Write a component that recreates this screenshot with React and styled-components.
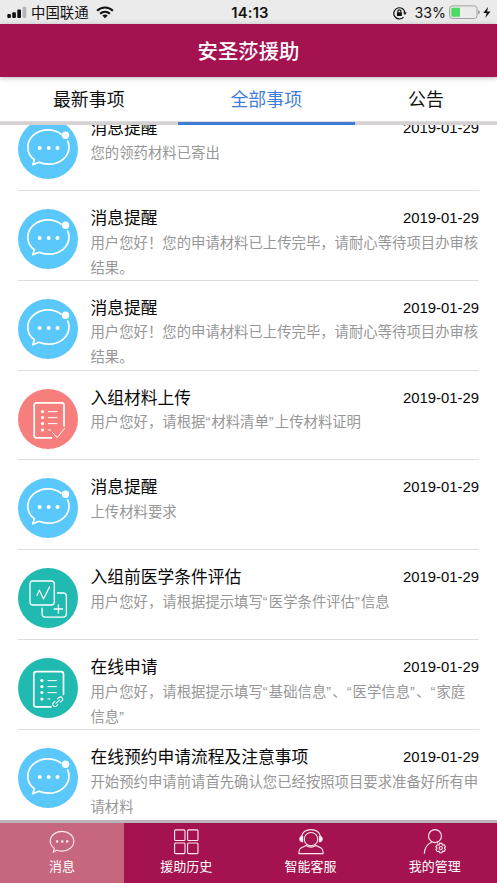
import React from "react";
import styled, { createGlobalStyle } from "styled-components";

const cjk = '"Noto Sans CJK SC", sans-serif';

const GlobalStyle = createGlobalStyle`
  * { box-sizing: border-box; }
  body { margin: 0; background: #fff; font-family: Inter, ${cjk}; }
`;

const Screen = styled.div`
  display: flex;
  flex-direction: column;
  width: 497px;
  height: 883px;
  overflow: hidden;
  background: #fff;
`;

const StatusBar = styled.div`
  flex: none;
  display: grid;
  grid-template-columns: 1fr auto 1fr;
  align-items: center;
  height: 24px;
  padding: 1px 5px 0 7px;
  background: #ebebeb;
  color: #111;
  font-size: 14.4px;
  line-height: 24px;
`;

const StatusGroup = styled.div`
  display: flex;
  align-items: center;
  justify-content: ${(p) => (p.$end ? "flex-end" : "flex-start")};
  height: 24px;

  svg {
    margin-bottom: 1px;
  }
`;

const Clock = styled.span`
  margin-left: 1px;
  font-size: 14.8px;
  font-weight: 600;
  letter-spacing: 0.2px;
`;

const Carrier = styled.span`
  margin: 0 7px 0 4px;
`;

const Percent = styled.span`
  margin: 0 3px 0 8px;
  font-size: 14.2px;
`;

const Header = styled.header`
  flex: none;
  position: relative;
  display: flex;
  align-items: center;
  justify-content: center;
  height: 53px;
  background: #a4134f;
  box-shadow: 0 1px 5px rgba(0, 0, 0, 0.28);
  color: #fff;
  font: 500 20.4px/53px ${cjk};
`;

const Tabs = styled.nav`
  flex: none;
  display: grid;
  grid-template-columns: 177.5px 177.5px 1fr;
  height: 48px;
`;

const Tab = styled.div`
  height: 48px;
  border-bottom: 3px solid ${(p) => (p.$active ? "#3f7dd8" : "#d6d2d3")};
  box-shadow: inset 0 -1px 0 #e0dddf;
  color: ${(p) => (p.$active ? "#3f7dd8" : "#111")};
  font: 400 17.9px/43px ${cjk};
  text-align: center;
`;

const ListViewport = styled.main`
  flex: 1;
  min-height: 0;
  overflow: hidden;
  padding: 0 18px;
`;

const List = styled.div`
  margin-top: -24px;
`;

const Row = styled.article`
  display: grid;
  grid-template-columns: 60px 1fr;
  column-gap: 12.5px;
  height: 89.87px;
  padding-top: 18px;
  border-bottom: 1px solid #dedede;

  &:last-child {
    border-bottom: 0;
  }
`;

const RowHead = styled.div`
  display: flex;
  justify-content: space-between;
  height: 20px;
`;

const RowTitle = styled.h2`
  margin: 0;
  color: #080808;
  font: 400 16.75px/17px ${cjk};
`;

const RowDate = styled.time`
  color: #080808;
  font: 14.85px/18px "Liberation Sans", sans-serif;
`;

const RowText = styled.p`
  margin: -0.3px 0 0;
  color: #979797;
  font-family: ${cjk};
  font-size: 14.37px;
  font-weight: 400;
  line-height: 25px;
`;

const Quote = styled.span`
  font-family: "Liberation Sans", sans-serif;
  letter-spacing: 1.2px;
  line-height: 1;
`;

const RowBody = styled.div`
  min-width: 0;
`;

const BottomNav = styled.nav`
  flex: none;
  display: grid;
  grid-template-columns: repeat(4, 1fr);
  height: 63px;
  border-top: 3px solid #b9b5ba;
  background: #a4134f;
`;

const NavItem = styled.div`
  display: flex;
  flex-direction: column;
  align-items: center;
  padding-top: 5px;
  background: ${(p) => (p.$active ? "#c6667f" : "#a4134f")};
  color: #fff;
  font: 400 13px/20px ${cjk};
`;

const NavSvg = styled.svg`
  display: block;
  flex: none;
  width: 28px;
  height: 28px;
  fill: none;
  stroke: #fbe9f0;
  stroke-width: 1.1;
`;

const Badge = styled.svg`
  display: block;
  width: 60px;
  height: 60px;
  fill: none;
  stroke: #fff;
  stroke-width: 1.7;
  stroke-linecap: round;
  stroke-linejoin: round;
`;

const ChatBadge = () => (
  <Badge viewBox="0 0 60 60">
    <circle cx="30" cy="30" r="30" fill="#5ac8fa" stroke="none" />
    <path d="M43 15.2C39.5 12.3 35 10.8 30 10.8C18.8 10.8 9.8 18.5 9.8 28.3C9.8 33.6 12.4 37.9 16.4 40.8L14.8 45.8L21 43.3C24 44.7 27 45.2 30.5 45.2C42 45.2 51 37.8 51 28.3C51 26 50.6 23.9 49.6 21.9" />
    <g fill="#fff" stroke="none">
      <circle cx="47.5" cy="16.2" r="3.7" />
      <circle cx="21.7" cy="29" r="2" />
      <circle cx="30.7" cy="29" r="2" />
      <circle cx="39.5" cy="29" r="2" />
    </g>
  </Badge>
);

const ListLines = () => (
  <>
    <path d="M30.5 22.6H39M30.5 28.6H39M30.5 34.6H39M30.5 41H32.5" strokeWidth="1" />
    <g fill="#fff" stroke="none">
      <circle cx="24.5" cy="22.6" r="1.6" />
      <circle cx="24.5" cy="28.6" r="1.6" />
      <circle cx="24.5" cy="34.6" r="1.6" />
      <circle cx="24.5" cy="41" r="1.6" />
    </g>
  </>
);

const UploadBadge = () => (
  <Badge viewBox="0 0 60 60">
    <circle cx="30" cy="30" r="30" fill="#f67f7d" stroke="none" />
    <path d="M46 37V16.2Q46 13.8 43.6 13.8H18.6Q16.2 13.8 16.2 16.2V46.5Q16.2 48.9 18.6 48.9H33.5" />
    <ListLines />
    <path d="M34.6 43.6L39.2 48.6L46.6 39.4" strokeWidth="1" />
  </Badge>
);

const ReviewBadge = () => (
  <Badge viewBox="0 0 60 60">
    <circle cx="30" cy="30" r="30" fill="#20bab1" stroke="none" />
    <rect x="12" y="13" width="24.3" height="24" rx="3" strokeWidth="1.3" />
    <path d="M19 27.5L21.4 22.2L25.5 31L31.5 19" strokeWidth="1.2" />
    <path d="M39.4 25H45Q48.4 25 48.4 28.4V45.7Q48.4 49.1 45 49.1H27.5Q24.1 49.1 24.1 45.7V40.2" strokeWidth="1.3" />
    <path d="M40.4 36.8V45.2M36.2 41H44.6" strokeWidth="1.3" />
  </Badge>
);

const ApplyBadge = () => (
  <Badge viewBox="0 0 60 60">
    <circle cx="30" cy="30" r="30" fill="#20bab1" stroke="none" />
    <path d="M45.5 36.5V16Q45.5 13.6 43.1 13.6H18.2Q15.8 13.6 15.8 16V46.4Q15.8 48.8 18.2 48.8H33" />
    <g transform="translate(-.6 0)">
      <ListLines />
    </g>
    <g transform="rotate(-42 39.7 43.7)" strokeWidth="1">
      <path d="M38 41.5H36A2.2 2.2 0 0 0 33.8 43.7A2.2 2.2 0 0 0 36 45.9H38M41.4 41.5H43.4A2.2 2.2 0 0 1 45.6 43.7A2.2 2.2 0 0 1 43.4 45.9H41.4M37.3 43.7H42.1" />
    </g>
  </Badge>
);

const badges = { chat: ChatBadge, upload: UploadBadge, review: ReviewBadge, apply: ApplyBadge };

const MessageIcon = () => (
  <NavSvg viewBox="0 0 28 28">
    <path d="M6.3 20.3C3.7 18.5 2.2 16 2.2 13.3C2.2 7.7 7.5 3.4 14 3.4S25.8 7.7 25.8 13.3S20.5 23.1 14 23.1C12 23.1 10.5 22.8 9 22.2L5.3 24Z" />
    <g fill="#fff" stroke="none">
      <circle cx="9.2" cy="13.4" r="1.2" />
      <circle cx="14.2" cy="13.4" r="1.2" />
      <circle cx="19.2" cy="13.4" r="1.2" />
    </g>
  </NavSvg>
);

const GridIcon = () => (
  <NavSvg viewBox="0 0 28 28">
    <rect x="2.6" y="1.9" width="10.4" height="10.6" rx="1" />
    <rect x="15.6" y="1.9" width="10.4" height="10.6" rx="1" />
    <rect x="2.6" y="15" width="10.4" height="10.6" rx="1" />
    <rect x="15.6" y="15" width="10.4" height="10.6" rx="1" />
  </NavSvg>
);

const ServiceIcon = () => (
  <NavSvg viewBox="0 0 28 28">
    <circle cx="14" cy="11.2" r="6.7" />
    <path d="M4.5 8.4C5.6 4.2 9.4 1.6 14 1.6S22.4 4.2 23.5 8.4" />
    <path d="M5.6 8.2V13.6H4.6C3.4 13.2 2.8 12.2 2.8 10.9S3.4 8.6 4.6 8.2ZM22.4 8.2V13.6H23.4C24.6 13.2 25.2 12.2 25.2 10.9S24.6 8.6 23.4 8.2Z" fill="#fff" />
    <path d="M9.2 17.5L3.9 20Q1.9 21.2 1.9 25.6H26.1Q26.1 21.2 24.1 20L18.8 17.5Q14 20.8 9.2 17.5Z" />
  </NavSvg>
);

const ProfileIcon = () => (
  <NavSvg viewBox="0 0 28 28">
    <circle cx="14" cy="8.1" r="6.5" />
    <path d="M3.3 25.8C3.7 19.5 6.8 15.7 11 14M16 14.4L17.2 15" />
    <circle cx="19.7" cy="20.1" r="1.6" />
    <path d="M18.5 15.4H20.9L21.4 17.1L23.2 16.8L24.5 18.8L23.3 20.1L24.5 21.4L23.2 23.5L21.4 23.1L20.9 24.8H18.5L18 23.1L16.2 23.5L14.9 21.4L16.1 20.1L14.9 18.8L16.2 16.8L18 17.1Z" />
  </NavSvg>
);

const SignalIcon = () => (
  <svg width="20" height="13" viewBox="0 0 20 13" fill="#111">
    <rect x="0.3" y="8" width="3.6" height="4" rx="1" />
    <rect x="5.2" y="6.3" width="3.7" height="5.7" rx="1" />
    <rect x="10.3" y="3.6" width="3.7" height="8.4" rx="1" />
    <rect x="15.6" y="0.7" width="3.7" height="11.3" rx="1" fill="#b5b5b5" />
  </svg>
);

const WifiIcon = () => (
  <svg width="18" height="13" viewBox="0 0 18 13" fill="none" stroke="#111" strokeWidth="2.2">
    <path d="M1.1 4.7C5.6 .4 12.4 .4 16.9 4.7M4.1 7.8C7 5.1 11 5.1 13.9 7.8" />
    <path d="M6.3 9.6Q9 7.4 11.7 9.6L9 12.3Z" fill="#111" stroke="none" />
  </svg>
);

const RotationLockIcon = () => (
  <svg width="14" height="14" viewBox="0 0 14 14" fill="none" stroke="#111" strokeWidth="1.2">
    <path d="M10.5 11.2A5.6 5.6 0 1 1 12 7.1" />
    <path d="M10 6.5H13.8L11.9 9Z" fill="#111" stroke="none" />
    <rect x="3.9" y="6.2" width="5" height="3.8" rx=".6" fill="#111" stroke="none" />
    <path d="M4.9 6.4V5.3A1.5 1.5 0 0 1 7.9 5.3V6.4" />
  </svg>
);

const BatteryIcon = () => (
  <svg width="43" height="15" viewBox="0 0 43 15" fill="none">
    <rect x="0.6" y="0.9" width="27.4" height="12.6" rx="2.8" stroke="#a2a2a2" />
    <rect x="2.3" y="2.7" width="8.7" height="9" rx=".8" fill="#4cd964" />
    <path d="M29 5.1Q31 5.5 31 7.2T29 9.3Z" fill="#a2a2a2" />
    <path d="M39.2 1.8L34.3 8H37.7L36.3 13L41.5 6.5H38Z" fill="#111" />
  </svg>
);

const messages = [
  { icon: "chat", title: "消息提醒", text: "您的领药材料已寄出" },
  { icon: "chat", title: "消息提醒", text: "用户您好！您的申请材料已上传完毕，请耐心等待项目办审核结果。" },
  { icon: "chat", title: "消息提醒", text: "用户您好！您的申请材料已上传完毕，请耐心等待项目办审核结果。" },
  { icon: "upload", title: "入组材料上传", text: "用户您好，请根据“材料清单”上传材料证明" },
  { icon: "chat", title: "消息提醒", text: "上传材料要求" },
  { icon: "review", title: "入组前医学条件评估", text: "用户您好，请根据提示填写“医学条件评估”信息" },
  { icon: "apply", title: "在线申请", text: "用户您好，请根据提示填写“基础信息”、“医学信息”、“家庭信息”" },
  { icon: "chat", title: "在线预约申请流程及注意事项", text: "开始预约申请前请首先确认您已经按照项目要求准备好所有申请材料" },
];

const navItems = [
  { label: "消息", Icon: MessageIcon, active: true },
  { label: "援助历史", Icon: GridIcon },
  { label: "智能客服", Icon: ServiceIcon },
  { label: "我的管理", Icon: ProfileIcon },
];

// Quotation marks are set in a Latin face so they stay narrow between full-width characters.
const withNarrowQuotes = (text) =>
  text.split(/([“”])/).map((part, i) => (/[“”]/.test(part) ? <Quote key={i}>{part}</Quote> : part));

function MessageRow({ icon, title, text }) {
  const Icon = badges[icon];
  return (
    <Row>
      <Icon />
      <RowBody>
        <RowHead>
          <RowTitle>{title}</RowTitle>
          <RowDate>2019-01-29</RowDate>
        </RowHead>
        <RowText>{withNarrowQuotes(text)}</RowText>
      </RowBody>
    </Row>
  );
}

export default function App() {
  return (
    <Screen>
      <GlobalStyle />
      <StatusBar>
        <StatusGroup>
          <SignalIcon />
          <Carrier>中国联通</Carrier>
          <WifiIcon />
        </StatusGroup>
        <Clock>14:13</Clock>
        <StatusGroup $end>
          <RotationLockIcon />
          <Percent>33%</Percent>
          <BatteryIcon />
        </StatusGroup>
      </StatusBar>
      <Header>安圣莎援助</Header>
      <Tabs>
        <Tab>最新事项</Tab>
        <Tab $active>全部事项</Tab>
        <Tab>公告</Tab>
      </Tabs>
      <ListViewport>
        <List>
          {messages.map((m, i) => (
            <MessageRow key={i} {...m} />
          ))}
        </List>
      </ListViewport>
      <BottomNav>
        {navItems.map(({ label, Icon, active }) => (
          <NavItem key={label} $active={active}>
            <Icon />
            {label}
          </NavItem>
        ))}
      </BottomNav>
    </Screen>
  );
}
